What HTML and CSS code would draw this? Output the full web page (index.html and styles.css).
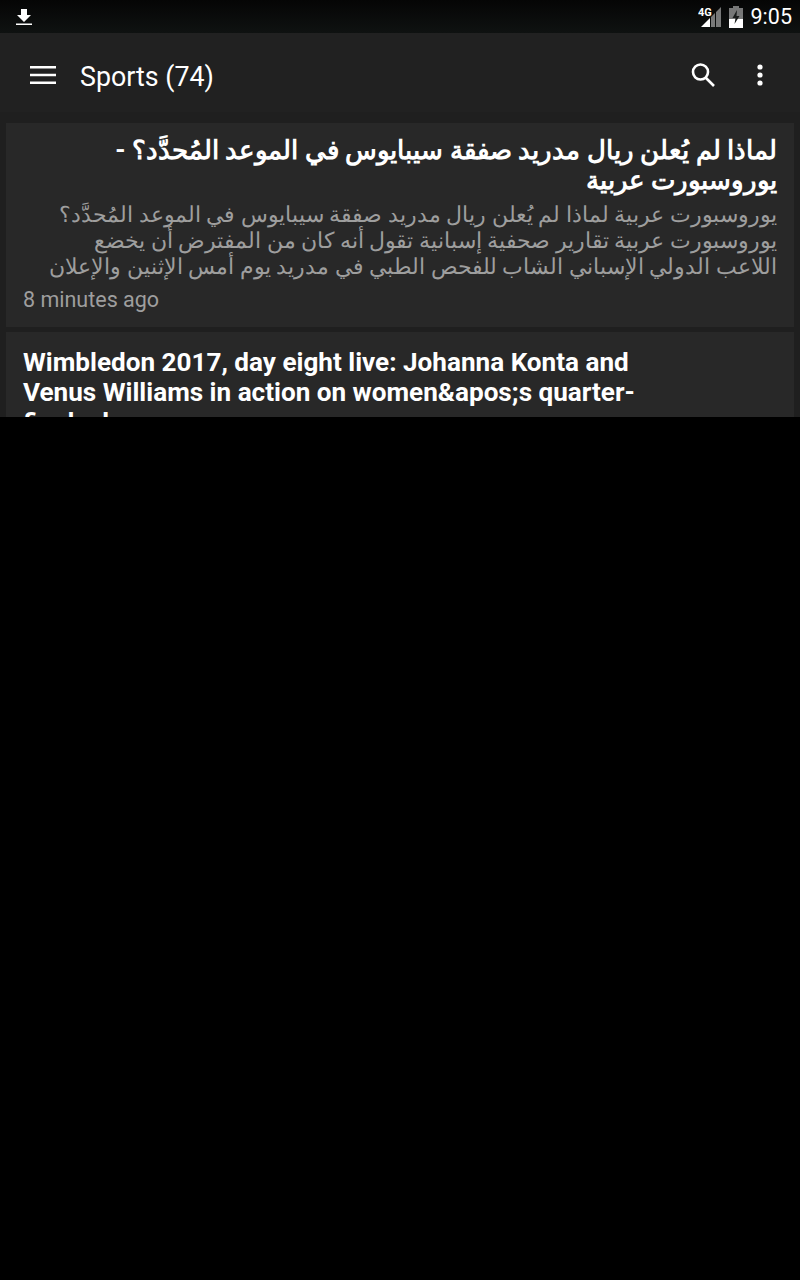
FILE: index.html
```html
<!doctype html>
<html>
<head>
<meta charset="utf-8">
<link rel="stylesheet" href="styles.css">
<title>Sports</title>
</head>
<body>
<div class="screen">
  <div class="statusbar">
    <svg class="status-download" width="18" height="18" viewBox="0 0 18 18"><path fill="#fff" d="M6 1h6v6h4l-7 7-7-7h4zM1 15.500h16V17H1z"/></svg>
    <div class="status-right">
      <svg class="status-signal" width="24" height="22" viewBox="0 0 24 22">
        <path fill="#fff" opacity=".45" d="M23 1v20h-5V6zM17 7v14h-4V11z"/>
        <path fill="#fff" d="M12 12v9H3z"/>
        <text x="0" y="10" class="status-4g">4G</text>
      </svg>
      <svg class="status-battery" width="14" height="22" viewBox="0 0 14 22">
        <path fill="#fff" opacity=".45" d="M4 0h6v2h4v11H0V2h4z"/>
        <path fill="#fff" d="M0 13h14v9H0z"/>
        <path fill="#1a1d1c" d="M8 4 3.500 12H6.500L5.500 18 10.500 10H7.500z"/>
      </svg>
      <span class="status-time">9:05</span>
    </div>
  </div>
  <div class="toolbar">
    <svg class="nav-icon" width="26" height="20" viewBox="0 0 26 20"><path fill="#fff" d="M0 1h26v2.500H0zM0 8.800h26v2.500H0zM0 16.500h26V19H0z"/></svg>
    <h1 class="toolbar-title">Sports (74)</h1>
    <svg class="search-icon" width="26" height="26" viewBox="0 0 26 26"><path fill="none" stroke="#fff" stroke-width="2.600" d="M10.500 2.500a7.500 7.500 0 1 0 0 15 7.500 7.500 0 0 0 0-15zM16 16l8 8"/></svg>
    <svg class="more-icon" width="6" height="22" viewBox="0 0 6 22"><circle fill="#fff" cx="3" cy="3" r="2.600"/><circle fill="#fff" cx="3" cy="11" r="2.600"/><circle fill="#fff" cx="3" cy="19" r="2.600"/></svg>
  </div>
  <div class="list">
    <div class="card card-rtl">
      <h2 class="card-title">لماذا لم يُعلن ريال مدريد صفقة سيبايوس في الموعد المُحدَّد؟ - يوروسبورت عربية</h2>
      <p class="card-text">يوروسبورت عربية لماذا لم يُعلن ريال مدريد صفقة سيبايوس في الموعد المُحدَّد؟<br>يوروسبورت عربية تقارير صحفية إسبانية تقول أنه كان من المفترض أن يخضع<br>اللاعب الدولي الإسباني الشاب للفحص الطبي في مدريد يوم أمس الإثنين والإعلان</p>
      <p class="card-time">8 minutes ago</p>
    </div>
    <div class="card">
      <h2 class="card-title">Wimbledon 2017, day eight live: Johanna Konta and Venus Williams in action on women&amp;apos;s quarter-finals day</h2>
    </div>
  </div>
</div>
</body>
</html>
```

FILE: styles.css
```css
html,
body {
    margin: 0;
    padding: 0;
    background: #000;
}
body {
    font-family: Roboto, "Noto Sans", sans-serif;
    color: #fff;
}
.screen {
    width: 800px;
    height: 417px;
    overflow: hidden;
    background: #1f1f1f;
}
.statusbar {
    height: 33px;
    display: flex;
    align-items: center;
    justify-content: space-between;
    padding: 0 8px 0 15px;
    background: linear-gradient(#050505, #0f1211);
}
.status-right {
    display: flex;
    align-items: center;
    gap: 8px;
}
.status-signal {
    margin-right: -1px;
}
.status-4g {
    font-size: 11px;
    font-weight: 700;
    fill: #fff;
}
.status-time {
    font-size: 21.500px;
}
.toolbar {
    height: 79px;
    box-sizing: border-box;
    display: flex;
    align-items: center;
    padding: 5px 37px 0 30px;
    background: #212121;
}
.toolbar-title {
    flex: 1;
    margin: 4px 0 0 24px;
    font-size: 26.800px;
    font-weight: 400;
}
.search-icon {
    margin-right: 41px;
}
.list {
    padding: 11px 6px 0;
}
.card {
    padding: 15px 17px 14px;
    margin-bottom: 5px;
    background: #282828;
}
.card-rtl {
    direction: rtl;
    padding-top: 12px;
    height: 204px;
    box-sizing: border-box;
}
.card-title {
    margin: 0;
    font-size: 26.100px;
    line-height: 30px;
    font-weight: 700;
    max-width: 650px;
}
.card-rtl .card-title {
    max-width: none;
    font-size: 26px;
}
.card-text {
    margin: 6px 0 0;
    font-size: 22.200px;
    line-height: 26px;
    color: #9e9e9e;
    white-space: nowrap;
}
.card-time {
    margin: 6px 0 0;
    direction: ltr;
    font-size: 21.500px;
    line-height: 30px;
    color: #9e9e9e;
}
```
